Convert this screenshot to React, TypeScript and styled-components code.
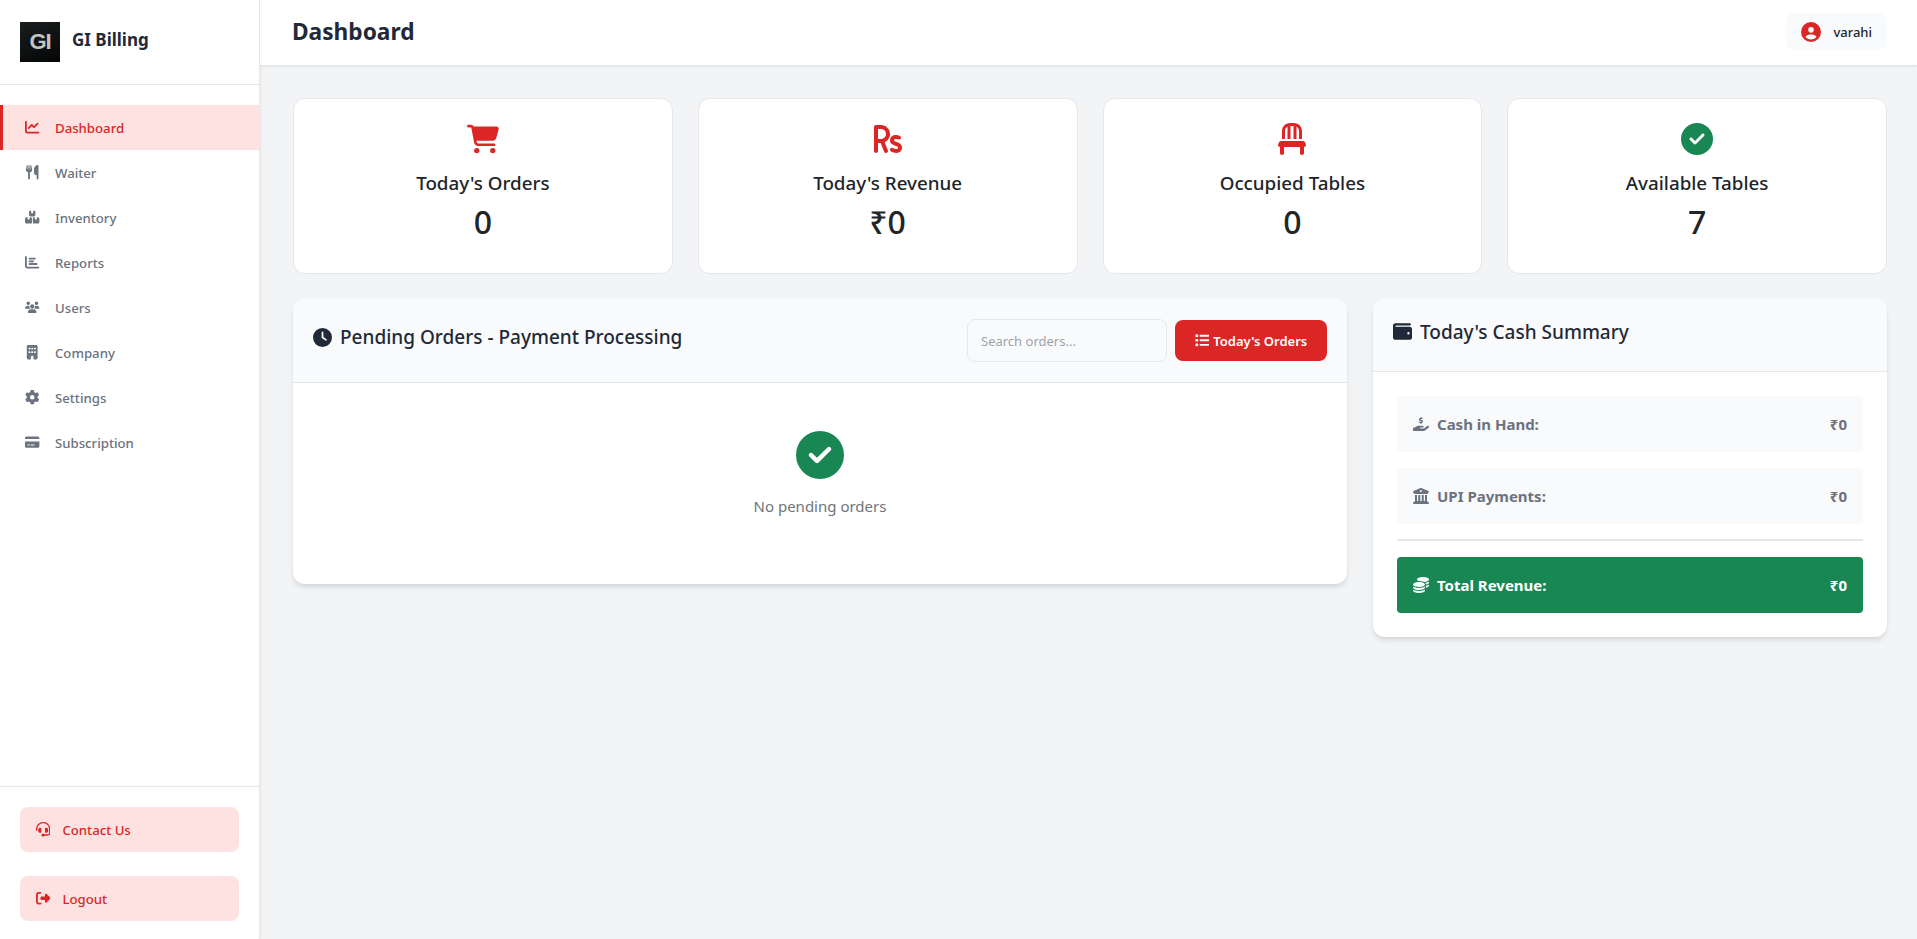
import React, { FC, ReactNode } from "react";
import styled, { createGlobalStyle } from "styled-components";
import {
  FaChartLine,
  FaUtensils,
  FaBoxesStacked,
  FaChartBar,
  FaUsers,
  FaBuilding,
  FaGear,
  FaCreditCard,
  FaHeadset,
  FaRightFromBracket,
  FaCartShopping,
  FaRupeeSign,
  FaChair,
  FaCircleCheck,
  FaCircleUser,
  FaClock,
  FaList,
  FaWallet,
  FaHandHoldingDollar,
  FaBuildingColumns,
  FaCoins,
} from "react-icons/fa6";

const GlobalStyle = createGlobalStyle`
  * { box-sizing: border-box; }
  html, body { margin: 0; height: 100%; }
  body {
    font-family: "Noto Sans", "Open Sans", Arial, sans-serif;
    background: #f3f4f6;
    color: #1f2937;
    overflow: hidden;
  }
  svg {
    height: 1em;
    width: auto;
    flex-shrink: 0;
  }
`;

const Shell = styled.div`
  display: flex;
  height: 939px;
`;

const Sidebar = styled.aside`
  width: 260px;
  flex-shrink: 0;
  background: #fff;
  border-right: 1px solid #e5e7eb;
  box-shadow: 1px 0 3px rgba(0, 0, 0, 0.05);
  display: flex;
  flex-direction: column;
  z-index: 2;
`;

const Brand = styled.div`
  height: 85px;
  padding: 20px;
  display: flex;
  align-items: center;
  gap: 12px;
  border-bottom: 1px solid #e5e7eb;
`;

const Logo = styled.div`
  width: 40px;
  height: 40px;
  background: linear-gradient(160deg, #1a1d1e, #050707);
  color: #c4c4c4;
  font-family: "Liberation Sans", Arial, sans-serif;
  font-size: 22px;
  font-weight: 700;
  letter-spacing: -1px;
  display: flex;
  align-items: center;
  justify-content: center;
`;

const BrandName = styled.span`
  font-size: 17px;
  font-weight: 700;
  color: #1f2937;
  margin-top: -5px;
`;

const Nav = styled.nav`
  flex: 1;
  padding-top: 20px;
`;

const NavItem = styled.a<{ $active?: boolean }>`
  height: 45px;
  padding-left: ${(p) => (p.$active ? "22px" : "25px")};
  display: flex;
  align-items: center;
  gap: 15px;
  font-size: 13.2px;
  font-weight: 500;
  color: ${(p) => (p.$active ? "#dc2626" : "#6b7280")};
  background: ${(p) => (p.$active ? "#fee2e2" : "transparent")};
  border-left: ${(p) => (p.$active ? "3px solid #dc2626" : "none")};
`;

const NavIcon = styled.span`
  width: 15px;
  display: flex;
  justify-content: center;
  font-size: 14.4px;
`;

const SideFooter = styled.div`
  border-top: 1px solid #e5e7eb;
  padding: 20px 20px 18px;
  display: flex;
  flex-direction: column;
  gap: 24px;
`;

const SideButton = styled.a`
  height: 45px;
  border-radius: 8px;
  background: #fee2e2;
  color: #dc2626;
  padding-left: 16px;
  display: flex;
  align-items: center;
  gap: 12px;
  font-size: 13.2px;
  font-weight: 500;
  svg {
    font-size: 14.4px;
  }
`;

const Main = styled.div`
  flex: 1;
  min-width: 0;
  display: flex;
  flex-direction: column;
`;

const TopBar = styled.header`
  height: 65px;
  flex-shrink: 0;
  background: #fff;
  box-shadow: 0 1px 3px rgba(0, 0, 0, 0.1);
  padding: 0 30px 0 32px;
  display: flex;
  align-items: center;
  justify-content: space-between;
`;

const PageTitle = styled.h1`
  margin: -3px 0 0;
  font-size: 22.7px;
  font-weight: 700;
  color: #1f2937;
`;

const UserPill = styled.div`
  height: 37px;
  margin-top: -2px;
  padding: 0 15px;
  border-radius: 8px;
  background: #f9fafb;
  display: flex;
  align-items: center;
  gap: 12px;
  font-size: 13px;
  font-weight: 500;
  color: #212529;
  svg {
    font-size: 20px;
    color: #dc2626;
  }
`;

const Content = styled.main`
  padding: 33px 30px 0 33px;
`;

const StatGrid = styled.section`
  display: grid;
  grid-template-columns: repeat(4, 1fr);
  gap: 25px;
`;

const StatCard = styled.div`
  height: 176px;
  background: #fff;
  border: 1px solid #e5e7eb;
  border-radius: 12px;
  padding-top: 24px;
  display: flex;
  flex-direction: column;
  align-items: center;
`;

const StatIcon = styled.div<{ $color: string }>`
  height: 32px;
  font-size: 32px;
  line-height: 32px;
  color: ${(p) => p.$color};
  svg {
    display: block;
  }
`;

const StatLabel = styled.div`
  margin-top: 15px;
  font-size: 18.8px;
  font-weight: 500;
  line-height: 26px;
  color: #212529;
`;

const StatValue = styled.div`
  margin-top: 6px;
  font-size: 32px;
  font-weight: 550;
  line-height: 40px;
  color: #212529;
`;

const PanelGrid = styled.section`
  margin-top: 25px;
  display: grid;
  grid-template-columns: 1fr 514px;
  gap: 26px;
  align-items: start;
`;

const Panel = styled.div`
  background: #fff;
  border-radius: 12px;
  overflow: hidden;
  box-shadow: 0 4px 6px -1px rgba(0, 0, 0, 0.1), 0 2px 4px -1px rgba(0, 0, 0, 0.06);
`;

const PanelHeader = styled.div<{ $height: number }>`
  height: ${(p) => p.$height}px;
  padding: 0 20px;
  background: #f9fafb;
  border-bottom: 1px solid #e5e7eb;
  display: flex;
  align-items: center;
  justify-content: space-between;
`;

const PanelTitle = styled.h2`
  margin: -7px 0 0;
  font-size: 19px;
  font-weight: 500;
  color: #1f2937;
  display: flex;
  align-items: center;
  gap: 8px;
`;

const Tools = styled.div`
  display: flex;
  align-items: center;
  gap: 8px;
`;

const SearchInput = styled.input`
  width: 200px;
  height: 43px;
  padding: 0 13px;
  border: 1px solid #e5e7eb;
  border-radius: 8px;
  background: #f9fafb;
  font-family: inherit;
  font-size: 13px;
  outline: none;
  &::placeholder {
    color: #9ca3af;
  }
`;

const RedButton = styled.button`
  width: 152px;
  height: 41px;
  border: none;
  border-radius: 8px;
  background: #dc2626;
  color: #fff;
  font-family: inherit;
  font-size: 13px;
  font-weight: 600;
  display: flex;
  align-items: center;
  justify-content: center;
  gap: 4px;
  svg {
    font-size: 14.5px;
  }
`;

const EmptyState = styled.div`
  height: 201px;
  padding-top: 48px;
  display: flex;
  flex-direction: column;
  align-items: center;
  color: #6c757d;
  font-size: 15px;
  svg {
    font-size: 48px;
    color: #198754;
    margin-bottom: 17px;
  }
`;

const SummaryBody = styled.div`
  padding: 24px;
  display: flex;
  flex-direction: column;
`;

const SummaryRow = styled.div<{ $total?: boolean }>`
  height: 56px;
  padding: 0 16px;
  border-radius: 4px;
  background: ${(p) => (p.$total ? "#198754" : "#f9fafb")};
  color: ${(p) => (p.$total ? "#fff" : "#6b7280")};
  font-size: 15px;
  font-weight: 700;
  display: flex;
  align-items: center;
  justify-content: space-between;
  & + & {
    margin-top: 16px;
  }
`;

const SummaryLabel = styled.span`
  display: flex;
  align-items: center;
  gap: 8px;
  svg {
    font-size: 16px;
  }
`;

const Rule = styled.hr`
  margin: 15px 0 16px;
  border: none;
  border-top: 2px solid #e5e7eb;
`;

type NavEntry = { label: string; icon: ReactNode; active?: boolean };

const navItems: NavEntry[] = [
  { label: "Dashboard", icon: <FaChartLine />, active: true },
  { label: "Waiter", icon: <FaUtensils /> },
  { label: "Inventory", icon: <FaBoxesStacked /> },
  { label: "Reports", icon: <FaChartBar /> },
  { label: "Users", icon: <FaUsers /> },
  { label: "Company", icon: <FaBuilding /> },
  { label: "Settings", icon: <FaGear /> },
  { label: "Subscription", icon: <FaCreditCard /> },
];

const stats = [
  { label: "Today's Orders", value: "0", icon: <FaCartShopping />, color: "#dc2626" },
  { label: "Today's Revenue", value: "₹0", icon: <FaRupeeSign />, color: "#dc2626" },
  { label: "Occupied Tables", value: "0", icon: <FaChair />, color: "#dc2626" },
  { label: "Available Tables", value: "7", icon: <FaCircleCheck />, color: "#198754" },
];

const App: FC = () => (
  <Shell>
    <GlobalStyle />
    <Sidebar>
      <Brand>
        <Logo>GI</Logo>
        <BrandName>GI Billing</BrandName>
      </Brand>
      <Nav>
        {navItems.map((item) => (
          <NavItem key={item.label} $active={item.active}>
            <NavIcon>{item.icon}</NavIcon>
            {item.label}
          </NavItem>
        ))}
      </Nav>
      <SideFooter>
        <SideButton>
          <FaHeadset />
          Contact Us
        </SideButton>
        <SideButton>
          <FaRightFromBracket />
          Logout
        </SideButton>
      </SideFooter>
    </Sidebar>
    <Main>
      <TopBar>
        <PageTitle>Dashboard</PageTitle>
        <UserPill>
          <FaCircleUser />
          varahi
        </UserPill>
      </TopBar>
      <Content>
        <StatGrid>
          {stats.map((s) => (
            <StatCard key={s.label}>
              <StatIcon $color={s.color}>{s.icon}</StatIcon>
              <StatLabel>{s.label}</StatLabel>
              <StatValue>{s.value}</StatValue>
            </StatCard>
          ))}
        </StatGrid>
        <PanelGrid>
          <Panel>
            <PanelHeader $height={84}>
              <PanelTitle>
                <FaClock />
                Pending Orders - Payment Processing
              </PanelTitle>
              <Tools>
                <SearchInput placeholder="Search orders..." />
                <RedButton>
                  <FaList />
                  Today's Orders
                </RedButton>
              </Tools>
            </PanelHeader>
            <EmptyState>
              <FaCircleCheck />
              No pending orders
            </EmptyState>
          </Panel>
          <Panel>
            <PanelHeader $height={73}>
              <PanelTitle>
                <FaWallet />
                Today's Cash Summary
              </PanelTitle>
            </PanelHeader>
            <SummaryBody>
              <SummaryRow>
                <SummaryLabel>
                  <FaHandHoldingDollar />
                  Cash in Hand:
                </SummaryLabel>
                <span>₹0</span>
              </SummaryRow>
              <SummaryRow>
                <SummaryLabel>
                  <FaBuildingColumns />
                  UPI Payments:
                </SummaryLabel>
                <span>₹0</span>
              </SummaryRow>
              <Rule />
              <SummaryRow $total>
                <SummaryLabel>
                  <FaCoins />
                  Total Revenue:
                </SummaryLabel>
                <span>₹0</span>
              </SummaryRow>
            </SummaryBody>
          </Panel>
        </PanelGrid>
      </Content>
    </Main>
  </Shell>
);

export default App;
